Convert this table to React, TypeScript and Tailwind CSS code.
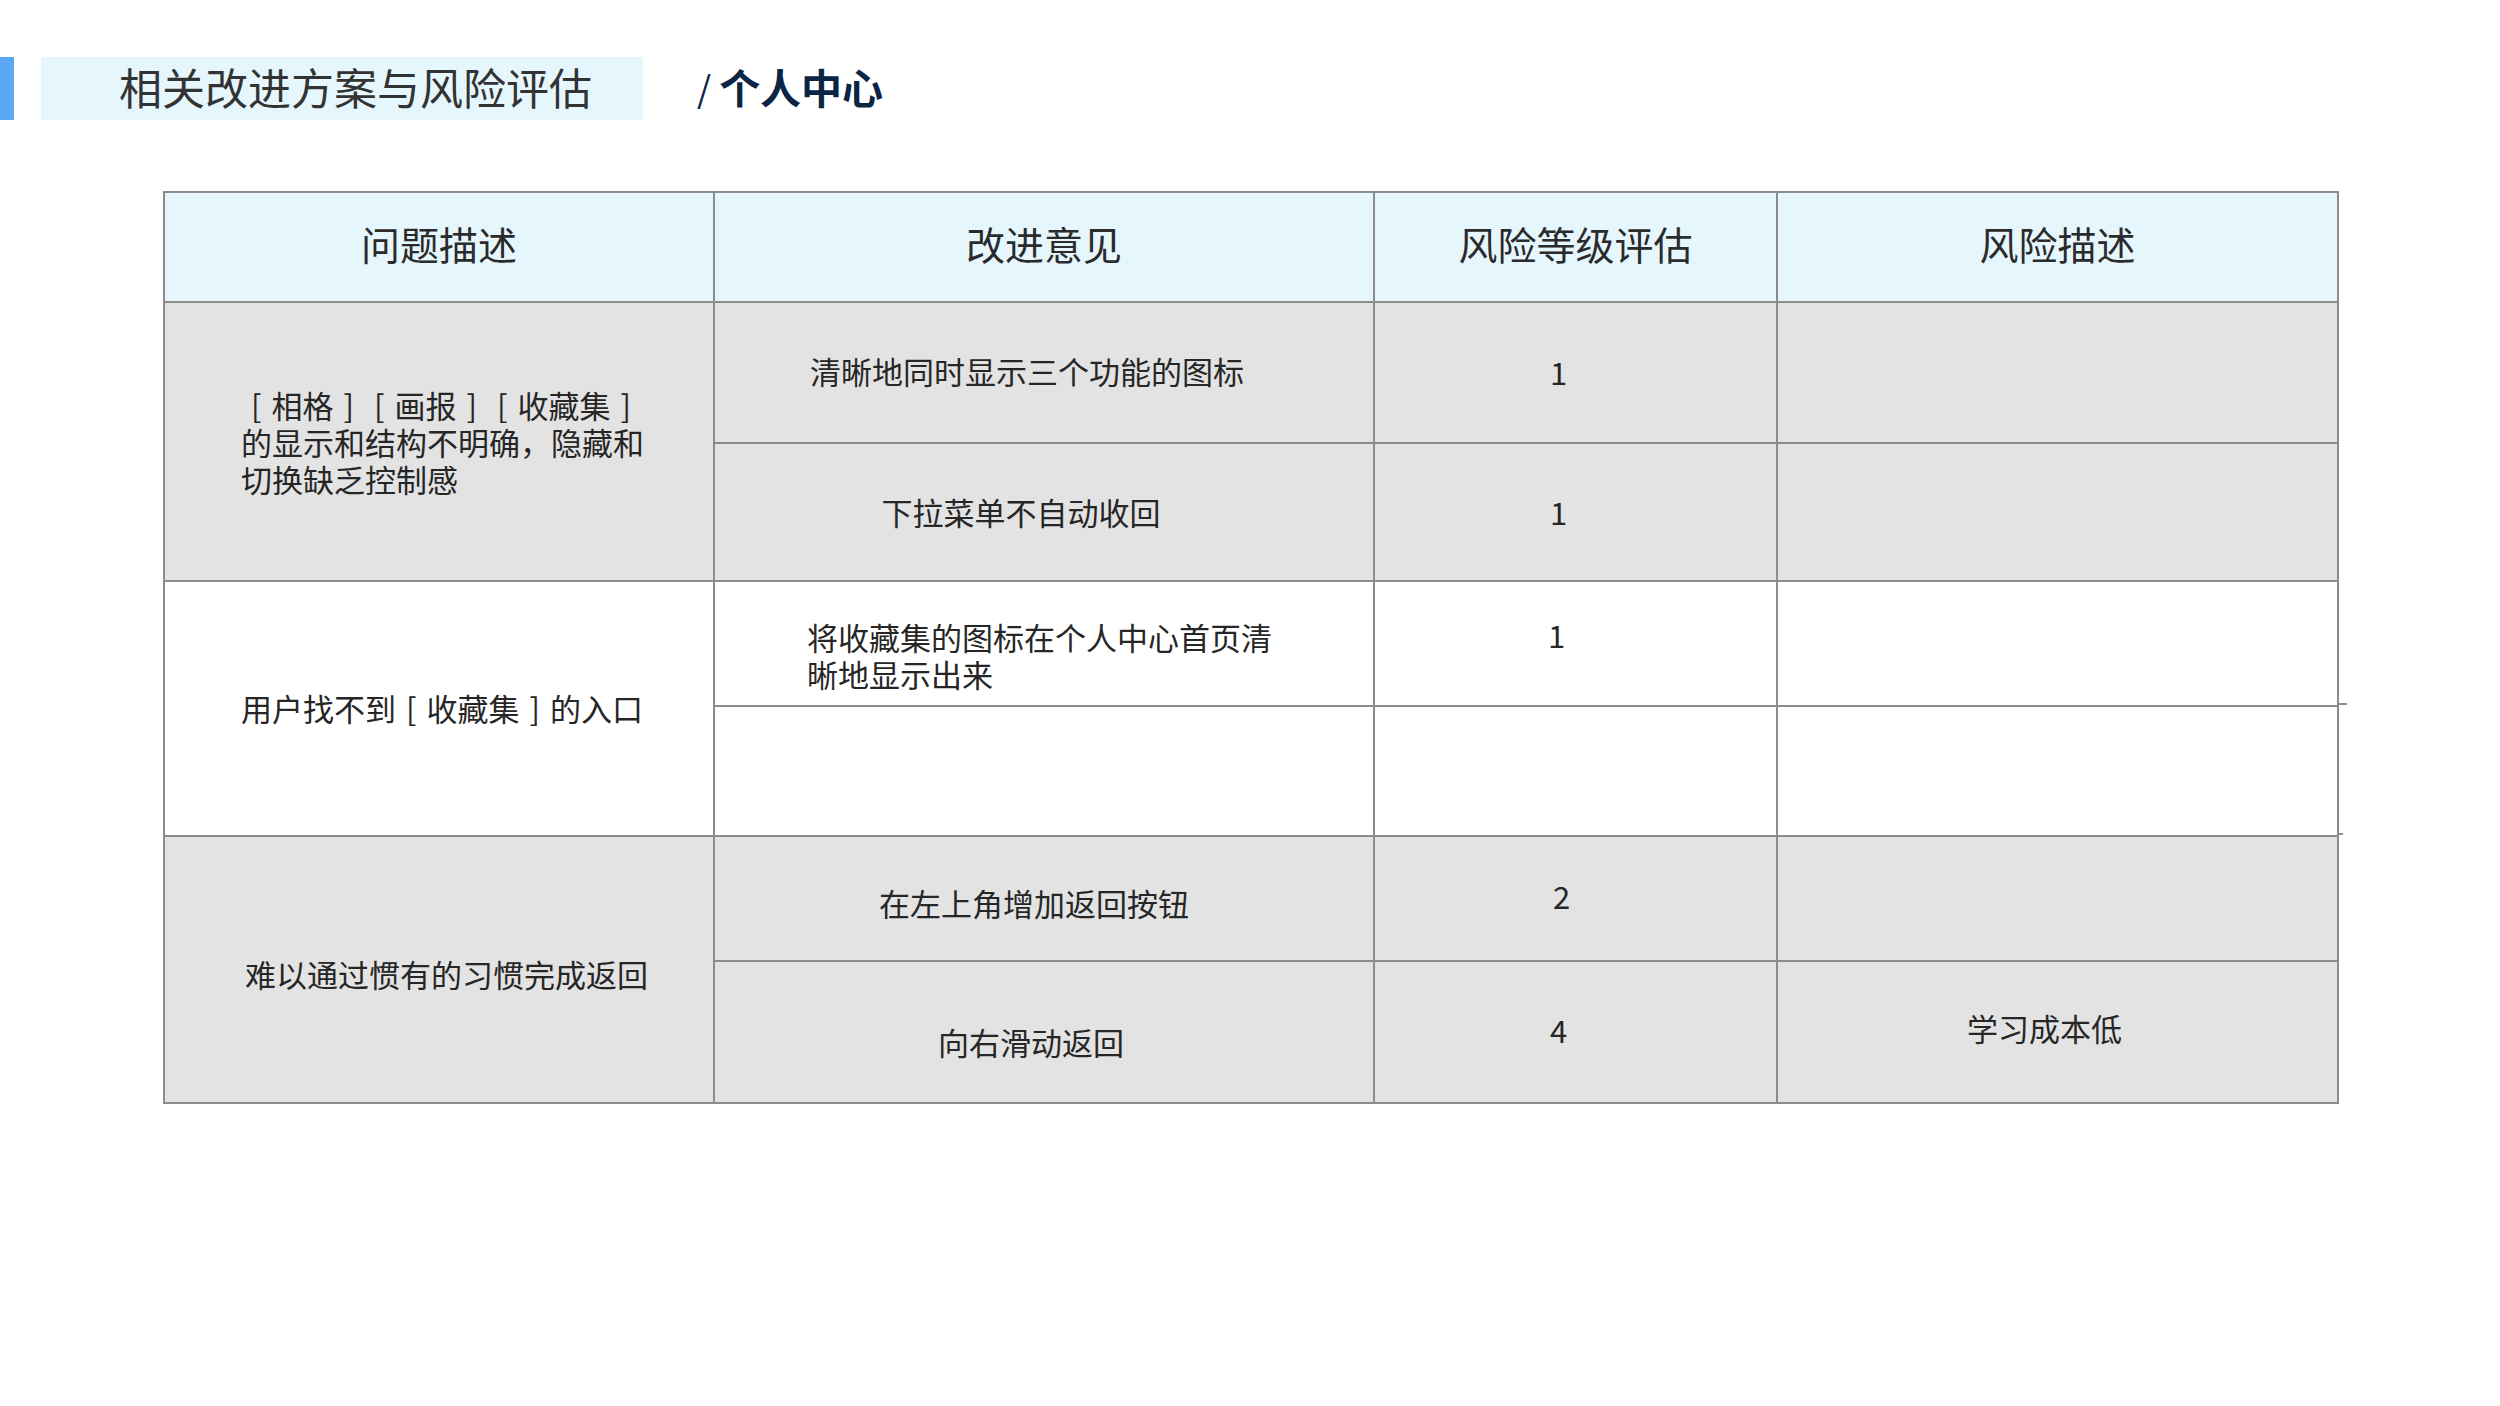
const font = { fontFamily: '"Noto Sans CJK SC", "Noto Sans", sans-serif' };

function Br({ c }: { c: string }) {
  return <span className="mx-[10px]">{c}</span>;
}

const line = 'border-[#8c8c8c]';

export default function App() {
  return (
    <div className="w-[2500px] h-[1406px] bg-white text-[#262626]" style={font}>
      {/* 标题 */}
      <div className="flex items-center h-[63px] mt-[57px]">
        <div className="w-[14px] h-[63px] bg-[#5aa9f5]" />
        <div className="ml-[27px] w-[602px] h-[63px] bg-[#e6f6fd] flex items-center pl-[78px] pb-[4px] text-[43px] leading-none text-[#333]">
          相关改进方案与风险评估
        </div>
        <div className="ml-[54px] pb-[4px] flex items-center text-[41px] leading-none font-bold text-[#0b2545]">
          <span className="font-normal text-[36px] mr-[8px]">/</span>
          个人中心
        </div>
      </div>

      {/* 表格 */}
      <div className="relative ml-[163px] mt-[71px] w-[2176px]">
        <div
          className={`grid grid-cols-[550px_660px_403px_561px] grid-rows-[110px_141px_138px_125px_130px_125px_142px] border-l-2 border-t-2 ${line}`}
        >
          {['问题描述', '改进意见', '风险等级评估', '风险描述'].map((h) => (
            <div
              key={h}
              className={`bg-[#e6f6fd] border-r-2 border-b-2 ${line} flex items-center justify-center pb-[8px] text-[39px] text-[#2b2b2b]`}
            >
              {h}
            </div>
          ))}

          {/* 第一组 */}
          <div className={`row-span-2 bg-[#e3e3e3] border-r-2 border-b-2 ${line} flex items-center pl-[76px] text-[31px] leading-[37px]`}>
            <div>
              <div>
                <Br c="[" />相格<Br c="]" /><Br c="[" />画报<Br c="]" /><Br c="[" />收藏集<Br c="]" />
              </div>
              <div>的显示和结构不明确，隐藏和</div>
              <div>切换缺乏控制感</div>
            </div>
          </div>
          <div className={`bg-[#e3e3e3] border-r-2 border-b-2 ${line} flex items-center justify-center pr-[34px] pb-[2px] text-[31px]`}>
            清晰地同时显示三个功能的图标
          </div>
          <div className={`bg-[#e3e3e3] border-r-2 border-b-2 ${line} flex items-center justify-center pr-[34px] text-[31px]`}>
            1
          </div>
          <div className={`bg-[#e3e3e3] border-r-2 border-b-2 ${line}`} />
          <div className={`bg-[#e3e3e3] border-r-2 border-b-2 ${line} flex items-center justify-center pr-[46px] text-[31px]`}>
            下拉菜单不自动收回
          </div>
          <div className={`bg-[#e3e3e3] border-r-2 border-b-2 ${line} flex items-center justify-center pr-[34px] text-[31px]`}>
            1
          </div>
          <div className={`bg-[#e3e3e3] border-r-2 border-b-2 ${line}`} />

          {/* 第二组 */}
          <div className={`row-span-2 bg-white border-r-2 border-b-2 ${line} flex items-center pl-[76px] text-[31px]`}>
            <div>
              用户找不到<Br c="[" />收藏集<Br c="]" />的入口
            </div>
          </div>
          <div className={`bg-white border-r-2 border-b-2 ${line} flex items-center pl-[92px] pt-[22px] text-[31px] leading-[37px]`}>
            <div>
              <div>将收藏集的图标在个人中心首页清</div>
              <div>晰地显示出来</div>
            </div>
          </div>
          <div className={`bg-white border-r-2 border-b-2 ${line} flex items-center justify-center pr-[38px] pb-[16px] text-[31px]`}>
            1
          </div>
          <div className={`bg-white border-r-2 border-b-2 ${line}`} />
          <div className={`bg-white border-r-2 border-b-2 ${line}`} />
          <div className={`bg-white border-r-2 border-b-2 ${line}`} />
          <div className={`bg-white border-r-2 border-b-2 ${line}`} />

          {/* 第三组 */}
          <div className={`row-span-2 bg-[#e3e3e3] border-r-2 border-b-2 ${line} flex items-center pl-[80px] pt-[10px] text-[31px]`}>
            难以通过惯有的习惯完成返回
          </div>
          <div className={`bg-[#e3e3e3] border-r-2 border-b-2 ${line} flex items-center justify-center pr-[20px] pt-[10px] text-[31px]`}>
            在左上角增加返回按钮
          </div>
          <div className={`bg-[#e3e3e3] border-r-2 border-b-2 ${line} flex items-center justify-center pr-[28px] pb-[4px] text-[31px]`}>
            2
          </div>
          <div className={`bg-[#e3e3e3] border-r-2 border-b-2 ${line}`} />
          <div className={`bg-[#e3e3e3] border-r-2 border-b-2 ${line} flex items-center justify-center pr-[26px] pt-[20px] text-[31px]`}>
            向右滑动返回
          </div>
          <div className={`bg-[#e3e3e3] border-r-2 border-b-2 ${line} flex items-center justify-center pr-[34px] pb-[4px] text-[31px]`}>
            4
          </div>
          <div className={`bg-[#e3e3e3] border-r-2 border-b-2 ${line} flex items-center justify-center pr-[26px] pb-[8px] text-[31px]`}>
            学习成本低
          </div>
        </div>
        {/* 右侧伸出的线头 */}
        <div className="absolute left-[2174px] top-[512px] w-[10px] h-[2px] bg-[#8c8c8c]" />
        <div className="absolute left-[2174px] top-[642px] w-[6px] h-[2px] bg-[#8c8c8c]" />
      </div>
    </div>
  );
}
